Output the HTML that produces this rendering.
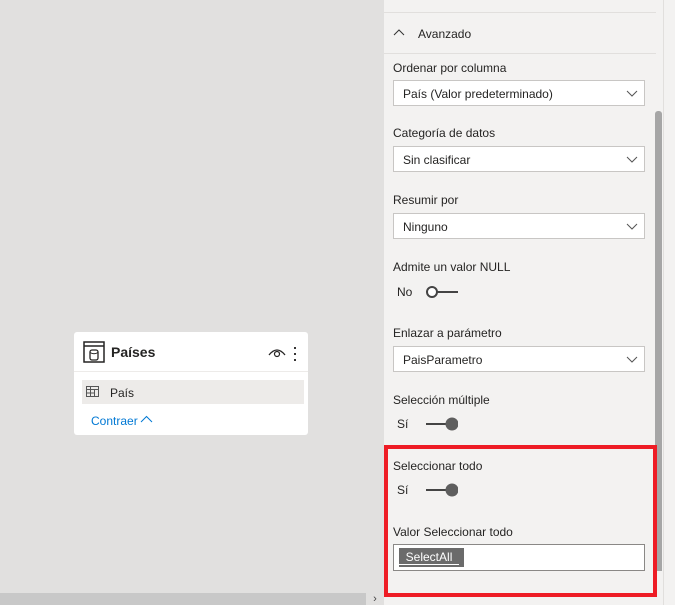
<!DOCTYPE html><html><head><style>
body{margin:0;width:675px;height:605px;overflow:hidden;position:relative;background:#e1e0df;font-family:"Liberation Sans",sans-serif;font-size:12px;color:#252423}
.a{position:absolute}
.panel{left:384px;top:0;width:291px;height:605px;background:#f3f2f1}
.lbl{position:absolute;left:393px;line-height:14px}
.dd{position:absolute;left:393px;width:250px;height:26px;background:#fff;border:1px solid #c8c6c4;box-sizing:border-box;width:252px}
.dd span{position:absolute;left:9px;top:6px}
.dd svg{position:absolute;right:6px;top:9px}
.tg{position:absolute;left:425px;width:33px;height:14px}
</style></head><body>
<div class="a panel"></div>
<div class="a" style="left:384px;top:12px;width:272px;height:1px;background:#e1dfdd"></div>
<div class="a" style="left:384px;top:53px;width:272px;height:1px;background:#e1dfdd"></div>
<div class="a" style="left:663px;top:0;width:1px;height:605px;background:#e1dfdd"></div>
<div class="a" style="left:655px;top:111px;width:7px;height:460px;background:#a6a6a6;border-radius:3px 3px 0 0"></div>
<div class="a" style="left:0;top:593px;width:384px;height:12px;background:#c8c8c8"></div>
<div class="a" style="left:366px;top:593px;width:18px;height:12px;background:#e1e0df;font-size:11px;text-align:center;line-height:12px;color:#444">&#8250;</div>
<svg class="a" style="left:393px;top:28px" width="12" height="8"><path d="M1 7L6 2L11 7" stroke="#333" fill="none"/></svg>
<div class="lbl" style="left:418px;top:27px">Avanzado</div>
<div class="lbl" style="top:61px">Ordenar por columna</div>
<div class="dd" style="top:80px"><span>País (Valor predeterminado)</span><svg width="12" height="8"><path d="M1 1L6 6L11 1" stroke="#555" fill="none"/></svg></div>
<div class="lbl" style="top:126px">Categoría de datos</div>
<div class="dd" style="top:146px"><span>Sin clasificar</span><svg width="12" height="8"><path d="M1 1L6 6L11 1" stroke="#555" fill="none"/></svg></div>
<div class="lbl" style="top:193px">Resumir por</div>
<div class="dd" style="top:213px"><span>Ninguno</span><svg width="12" height="8"><path d="M1 1L6 6L11 1" stroke="#555" fill="none"/></svg></div>
<div class="lbl" style="top:260px">Admite un valor NULL</div>
<div class="lbl" style="left:397px;top:285px">No</div>
<svg class="tg" style="top:285px" width="34" height="14"><circle cx="7" cy="7" r="5" stroke="#444" stroke-width="2" fill="#fff"/><path d="M12 7H33" stroke="#444" stroke-width="2"/></svg>
<div class="lbl" style="top:326px">Enlazar a parámetro</div>
<div class="dd" style="top:346px"><span>PaisParametro</span><svg width="12" height="8"><path d="M1 1L6 6L11 1" stroke="#555" fill="none"/></svg></div>
<div class="lbl" style="top:393px">Selección múltiple</div>
<div class="lbl" style="left:397px;top:417px">Sí</div>
<svg class="tg" style="top:417px" width="34" height="14"><path d="M1 7H22" stroke="#444" stroke-width="2"/><circle cx="27" cy="7" r="6.5" fill="#5e5e5e"/></svg>
<div class="a" style="left:384px;top:445px;width:273px;height:152px;border:4px solid #ee1c25;box-sizing:border-box"></div>
<div class="lbl" style="top:459px">Seleccionar todo</div>
<div class="lbl" style="left:397px;top:483px">Sí</div>
<svg class="tg" style="top:483px" width="34" height="14"><path d="M1 7H22" stroke="#444" stroke-width="2"/><circle cx="27" cy="7" r="6.5" fill="#5e5e5e"/></svg>
<div class="lbl" style="top:525px">Valor Seleccionar todo</div>
<div class="a" style="left:393px;top:544px;width:252px;height:27px;background:#fff;border:1px solid #8a8886;box-sizing:border-box"></div>
<div class="a" style="left:399px;top:548px;width:65px;height:19px;background:#6b6b6b;color:#fff;line-height:19px;padding-left:0"><span style="border-bottom:1px solid #fff">&nbsp;&nbsp;SelectAll&nbsp;&nbsp;</span></div>
<div class="a" style="left:74px;top:332px;width:234px;height:103px;background:#fff;border-radius:3px"></div>
<div class="a" style="left:74px;top:371px;width:234px;height:1px;background:#edebe9"></div>
<svg class="a" style="left:83px;top:341px" width="22" height="22"><rect x="1" y="1" width="20" height="20" fill="none" stroke="#252423" stroke-width="1.5"/><path d="M1 5H21" stroke="#252423" stroke-width="1.5"/><rect x="7" y="9" width="8" height="10" rx="2" fill="none" stroke="#252423" stroke-width="1.3"/><path d="M7 11.5Q11 14 15 11.5" stroke="#252423" fill="none"/></svg>
<div class="a" style="left:111px;top:344px;font-size:14px;font-weight:bold">Países</div>
<svg class="a" style="left:268px;top:345px" width="18" height="14"><path d="M1 10Q9 0 17 10" stroke="#252423" fill="none" stroke-width="1.3"/><circle cx="9" cy="9" r="2.5" stroke="#252423" fill="none" stroke-width="1.2"/></svg>
<div class="a" style="left:294px;top:345px;width:2px;height:16px;background:radial-gradient(circle,#252423 1px,transparent 1.2px) 0 0/2px 6px"></div>
<div class="a" style="left:82px;top:380px;width:222px;height:24px;background:#edebe9"></div>
<svg class="a" style="left:86px;top:386px" width="16" height="13"><rect x="0.5" y="0.5" width="12" height="10" fill="none" stroke="#555"/><path d="M0.5 3.5H12.5M4.5 0.5V10.5M8.5 3.5V10.5M0.5 7H9" stroke="#555"/></svg>
<div class="a" style="left:110px;top:386px">País</div>
<div class="a" style="left:91px;top:414px;color:#0078d4">Contraer</div>
<svg class="a" style="left:140px;top:415px" width="13" height="8"><path d="M1 7L6.5 1.5L12 7" stroke="#0078d4" fill="none"/></svg>
</body></html>
